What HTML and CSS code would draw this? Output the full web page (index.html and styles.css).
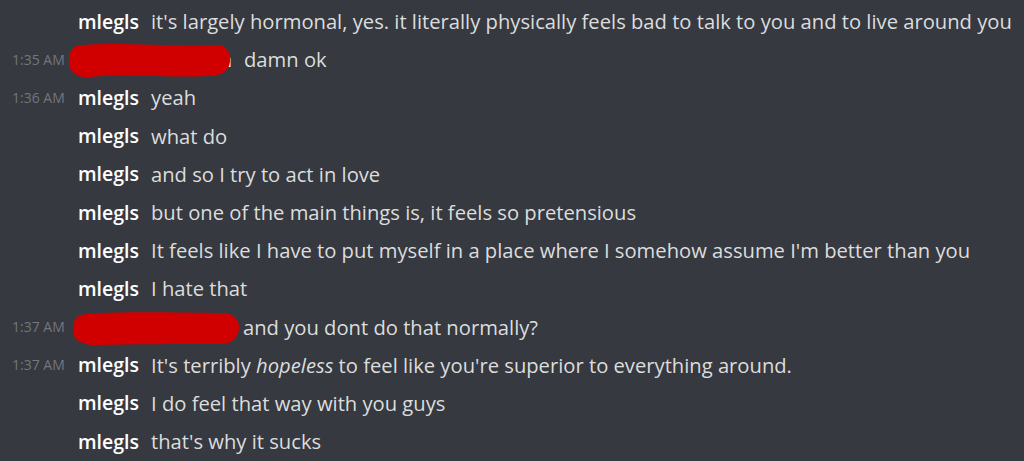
FILE: index.html
```html
<!DOCTYPE html>
<html>
<head>
<meta charset="utf-8">
<link rel="stylesheet" href="styles.css">
</head>
<body>
<div class="chat">
  <div class="row"><span class="ts"></span><span class="name">mlegls</span><span class="msg">it's largely hormonal, yes. it literally physically feels bad to talk to you and to live around you</span></div>
  <div class="row"><span class="ts">1:35 AM</span><span class="name redacted r1">n</span><span class="msg">damn ok</span>
    <svg class="blob b1" viewBox="0 0 162 35" width="162" height="35"><path d="M14,2 C50,-1 110,4 150,2 C159,2 163,11 162,19 C161,29 152,33 140,33 C100,35 60,30 22,34 C8,35 0,28 1,18 C1,8 5,2 14,2 Z" fill="#d00000"/></svg>
  </div>
  <div class="row"><span class="ts">1:36 AM</span><span class="name">mlegls</span><span class="msg">yeah</span></div>
  <div class="row"><span class="ts"></span><span class="name">mlegls</span><span class="msg">what do</span></div>
  <div class="row"><span class="ts"></span><span class="name">mlegls</span><span class="msg">and so I try to act in love</span></div>
  <div class="row"><span class="ts"></span><span class="name">mlegls</span><span class="msg">but one of the main things is, it feels so pretensious</span></div>
  <div class="row"><span class="ts"></span><span class="name">mlegls</span><span class="msg">It feels like I have to put myself in a place where I somehow assume I'm better than you</span></div>
  <div class="row"><span class="ts"></span><span class="name">mlegls</span><span class="msg">I hate that</span></div>
  <div class="row"><span class="ts">1:37 AM</span><span class="name redacted r2"></span><span class="msg">and you dont do that normally?</span>
    <svg class="blob b2" viewBox="0 0 168 35" width="168" height="35"><path d="M16,3 C55,0 115,2 152,2 C162,2 168,10 167,18 C166,28 158,34 146,33 C105,33 62,33 24,34 C9,34 0,28 1,18 C1,8 6,3 16,3 Z" fill="#d00000"/></svg>
  </div>
  <div class="row"><span class="ts">1:37 AM</span><span class="name">mlegls</span><span class="msg">It's terribly <em>hopeless</em> to feel like you're superior to everything around.</span></div>
  <div class="row"><span class="ts"></span><span class="name">mlegls</span><span class="msg">I do feel that way with you guys</span></div>
  <div class="row"><span class="ts"></span><span class="name">mlegls</span><span class="msg">that's why it sucks</span></div>
</div>
</body>
</html>
```
FILE: styles.css
```css
html, body {
  margin: 0;
  padding: 0;
  background: #36393f;
  width: 1024px;
  height: 461px;
  overflow: hidden;
}
.chat {
  padding-top: 2px;
  font-family: "Open Sans", "Noto Sans", sans-serif;
}
.row {
  position: relative;
  display: flex;
  align-items: center;
  height: 38.2px;
  white-space: nowrap;
}
.ts {
  box-sizing: border-box;
  width: 78px;
  padding-left: 12px;
  font-size: 14px;
  color: #72767d;
  flex: none;
}
.name {
  font-size: 19.5px;
  font-weight: 600;
  color: #ffffff;
  margin-right: 12px;
  flex: none;
}
.redacted {
  display: inline-block;
  text-align: right;
}
.r1 { width: 154px; }
.r2 { width: 153px; }
.msg {
  font-size: 20.2px;
  color: #dcddde;
}
.msg em {
  font-style: italic;
}
.blob {
  position: absolute;
  display: block;
}
.b1 { left: 68px; top: 3px; }
.b2 { left: 72px; top: 3px; }
```
